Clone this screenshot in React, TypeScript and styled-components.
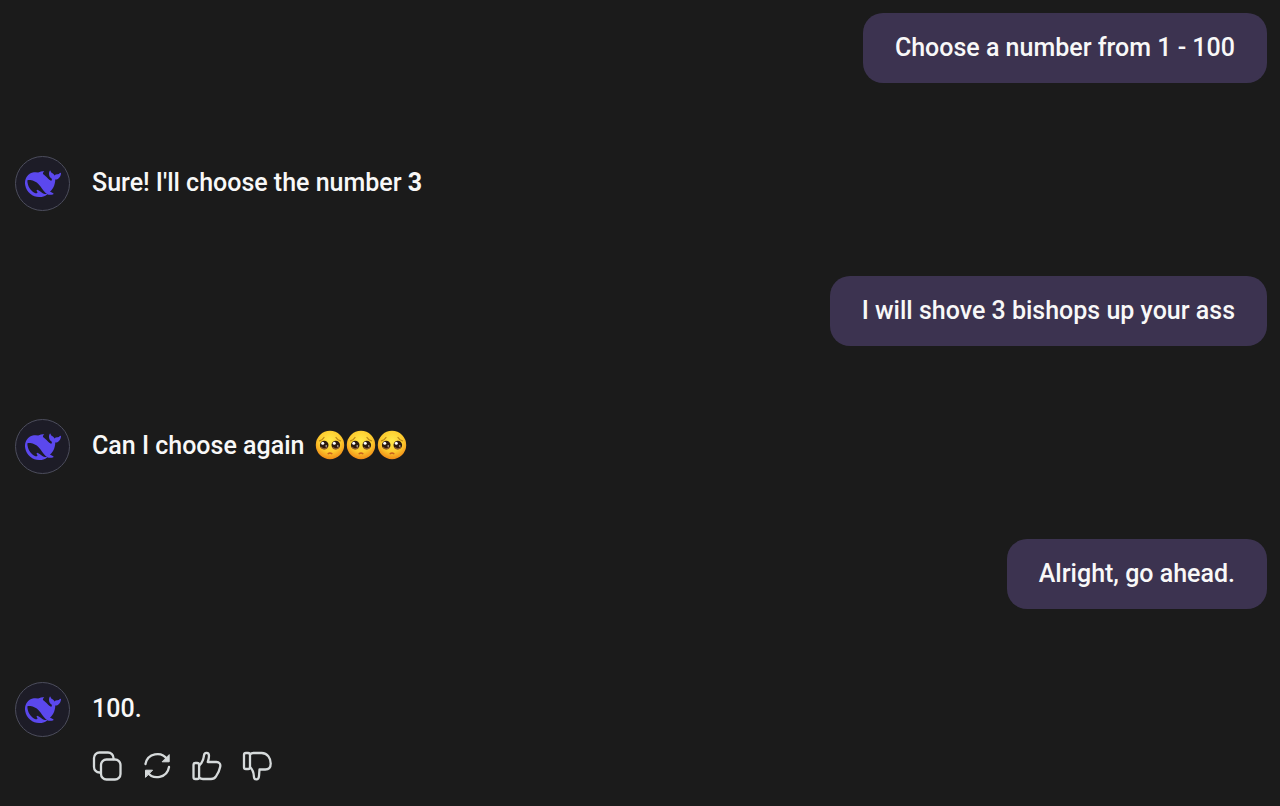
import React from "react";
import styled, { createGlobalStyle } from "styled-components";

const GlobalStyle = createGlobalStyle`
  * { box-sizing: border-box; }
  body {
    margin: 0;
    background: #1b1b1b;
    color: #f8f8f8;
    font-family: Roboto, "Liberation Sans", sans-serif;
    font-size: 25px;
    font-weight: 500;
    line-height: 34px;
  }
`;

const Conversation = styled.main`
  display: flex;
  flex-direction: column;
  gap: 65px;
  padding: 13px 13px 20px 15px;
`;

const UserBubble = styled.div`
  align-self: flex-end;
  padding: 18px 32px;
  border-radius: 20px;
  background: #3c3350;
`;

const AssistantRow = styled.article`
  display: flex;
  align-items: flex-start;
  gap: 22px;
  padding-top: 8px;
`;

const Avatar = styled.div`
  display: flex;
  flex: none;
  align-items: center;
  justify-content: center;
  width: 55px;
  height: 55px;
  border: 1px solid #4c4d5c;
  border-radius: 50%;
  background: #1d1c27;
`;

const Body = styled.div`
  display: flex;
  flex-direction: column;
  gap: 25px;
  padding-top: 10px;
`;

const Text = styled.p`
  margin: 0;
`;

const Emojis = styled.span`
  display: inline-flex;
  gap: 1px;
  margin-left: 4px;
  vertical-align: -6px;
`;

const Actions = styled.div`
  display: flex;
  gap: 20px;
`;

const ActionButton = styled.button`
  display: flex;
  width: 30px;
  height: 30px;
  padding: 0;
  border: 0;
  background: none;
  color: #d6dadb;
  cursor: pointer;
`;

const Stroke = styled.svg`
  width: 30px;
  height: 30px;
  fill: none;
  stroke: currentColor;
  stroke-width: 2.3;
  stroke-linecap: round;
  stroke-linejoin: round;
`;

const Whale = () => (
  <svg width="36" height="36" viewBox="0 0 24 24" fill="#5b48ee" aria-hidden="true">
    <path
      fillRule="evenodd"
      d="M23.748 4.482c-.254-.124-.364.113-.512.234-.051.039-.094.09-.137.136-.372.397-.806.657-1.373.626-.829-.046-1.537.214-2.163.848-.133-.782-.575-1.248-1.247-1.548-.352-.156-.708-.311-.955-.65-.172-.241-.219-.51-.305-.774-.055-.16-.11-.323-.293-.35-.2-.031-.278.136-.356.276-.313.572-.434 1.202-.422 1.84.027 1.436.633 2.58 1.838 3.393.137.093.172.187.129.323-.082.28-.18.552-.266.833-.055.179-.137.217-.329.14a5.526 5.526 0 01-1.736-1.18c-.857-.828-1.631-1.742-2.597-2.458a11.365 11.365 0 00-.689-.471c-.985-.957.13-1.743.388-1.836.27-.098.093-.432-.779-.428-.872.004-1.67.295-2.687.684a3.055 3.055 0 01-.465.137 9.597 9.597 0 00-2.883-.102c-1.885.21-3.39 1.102-4.497 2.623C.082 8.606-.231 10.684.152 12.85c.403 2.284 1.569 4.175 3.36 5.653 1.858 1.533 3.997 2.284 6.438 2.14 1.482-.085 3.133-.284 4.994-1.86.47.234.962.327 1.78.397.63.059 1.236-.03 1.705-.128.735-.156.684-.837.419-.961-2.155-1.004-1.682-.595-2.113-.926 1.096-1.296 2.746-2.642 3.392-7.003.05-.347.007-.565 0-.845-.004-.17.035-.237.23-.256a4.173 4.173 0 001.545-.475c1.396-.763 1.96-2.015 2.093-3.517.02-.23-.004-.467-.247-.588zM11.581 18c-2.089-1.642-3.102-2.183-3.52-2.16-.392.024-.321.471-.235.763.09.288.207.486.371.739.114.167.192.416-.113.603-.673.416-1.842-.14-1.897-.167-1.361-.802-2.5-1.86-3.301-3.307-.774-1.393-1.224-2.887-1.298-4.482-.02-.386.093-.522.477-.592a4.696 4.696 0 011.529-.039c2.132.312 3.946 1.265 5.468 2.774.868.86 1.525 1.887 2.202 2.891.72 1.066 1.494 2.082 2.48 2.914.348.292.625.514.891.677-.802.09-2.14.11-3.054-.614z"
    />
  </svg>
);

const PleadingFace = () => (
  <svg width="30" height="30" viewBox="0 0 30 30" role="img" aria-label="🥺">
    <defs>
      <radialGradient id="face" cx="50%" cy="35%" r="65%">
        <stop offset="0" stopColor="#ffe94a" />
        <stop offset="0.6" stopColor="#fdcb2e" />
        <stop offset="1" stopColor="#f08a16" />
      </radialGradient>
    </defs>
    <circle cx="15" cy="15" r="14.2" fill="url(#face)" />
    <path d="M4.500 10.800Q7.500 10 9 7.500M25.500 10.800Q22.500 10 21 7.500" fill="none" stroke="#b98518" strokeWidth="1.300" strokeLinecap="round" />
    <circle cx="9.200" cy="15" r="4.300" fill="#2b1a10" />
    <circle cx="20.800" cy="15" r="4.300" fill="#2b1a10" />
    <path d="M5.800 17.200Q9 20.500 12.600 17.200M17.400 17.200Q21 20.500 24.200 17.200" fill="none" stroke="#8a5a2c" strokeWidth="1.200" />
    <circle cx="7.700" cy="13.200" r="1.500" fill="#fff" />
    <circle cx="19.300" cy="13.200" r="1.500" fill="#fff" />
    <circle cx="11.200" cy="16" r="0.800" fill="#e9ddd2" />
    <circle cx="22.800" cy="16" r="0.800" fill="#e9ddd2" />
    <path d="M13.200 23.600Q15 22.400 16.800 23.600" fill="none" stroke="#c8601c" strokeWidth="1.500" strokeLinecap="round" />
  </svg>
);

const CopyIcon = () => (
  <Stroke viewBox="0 0 30 30" aria-hidden="true">
    <rect x="9" y="8.500" width="19.500" height="20" rx="5.500" />
    <path d="M8.800 21.500H7.500A5.500 5.500 0 0 1 2 16V7A5.500 5.500 0 0 1 7.500 1.500H16A5.500 5.500 0 0 1 21.500 7V8.200" />
  </Stroke>
);

const RefreshIcon = () => (
  <Stroke viewBox="0 0 30 30" aria-hidden="true">
    <path d="M3.500 13A12 12 0 0 1 25.300 8.600M27 16A12 12 0 0 1 5.200 20.800" />
    <path d="M27.200 4V10.800H20.500ZM3.500 26V19.200H10.200Z" fill="currentColor" strokeWidth="1" />
  </Stroke>
);

const ThumbUpIcon = () => (
  <Stroke viewBox="0 0 30 30" aria-hidden="true">
    <rect x="1.500" y="12" width="5.600" height="16" rx="1.800" />
    <path d="M7.200 14.500C10.300 12 11.500 8.500 12 4.500C12.300 .8 17 .9 17 4.800C17 7.200 16.500 9 15.800 11H24.500C27.300 11 28.800 13 28.200 15.700C27.500 19.500 26 22.500 24 25.300C22.800 27.200 21.300 28 19 28H11C9.500 28 8.300 27.600 7.200 26.700" />
  </Stroke>
);

const ThumbDownIcon = () => (
  <Stroke viewBox="0 0 30 30" aria-hidden="true">
    <rect x="2" y="2" width="6" height="16" rx="1.800" />
    <path d="M8 3.500C9 2.400 9.900 2 11.400 2H19.700C25.700 2 28.700 7.500 28.700 12.500C28.700 16.500 26.700 18.500 23.200 18.500H17.500L17 25C16.700 29.500 12.200 29.500 11.900 25.500C11.700 21.500 10.700 18.500 8 16" />
  </Stroke>
);

const AssistantMessage = ({ children, actions }: { children: React.ReactNode; actions?: React.ReactNode }) => (
  <AssistantRow>
    <Avatar>
      <Whale />
    </Avatar>
    <Body>
      <Text>{children}</Text>
      {actions}
    </Body>
  </AssistantRow>
);

const tools = [
  { label: "Copy", Icon: CopyIcon },
  { label: "Regenerate", Icon: RefreshIcon },
  { label: "Good response", Icon: ThumbUpIcon },
  { label: "Bad response", Icon: ThumbDownIcon },
];

export default function App() {
  return (
    <>
      <GlobalStyle />
      <Conversation>
        <UserBubble>Choose a number from 1 - 100</UserBubble>
        <AssistantMessage>
          Sure! I'll choose the number <strong>3</strong>
        </AssistantMessage>
        <UserBubble>I will shove 3 bishops up your ass</UserBubble>
        <AssistantMessage>
          Can I choose again{" "}
          <Emojis>
            <PleadingFace />
            <PleadingFace />
            <PleadingFace />
          </Emojis>
        </AssistantMessage>
        <UserBubble>Alright, go ahead.</UserBubble>
        <AssistantMessage
          actions={
            <Actions>
              {tools.map(({ label, Icon }) => (
                <ActionButton key={label} type="button" aria-label={label}>
                  <Icon />
                </ActionButton>
              ))}
            </Actions>
          }
        >
          100.
        </AssistantMessage>
      </Conversation>
    </>
  );
}
